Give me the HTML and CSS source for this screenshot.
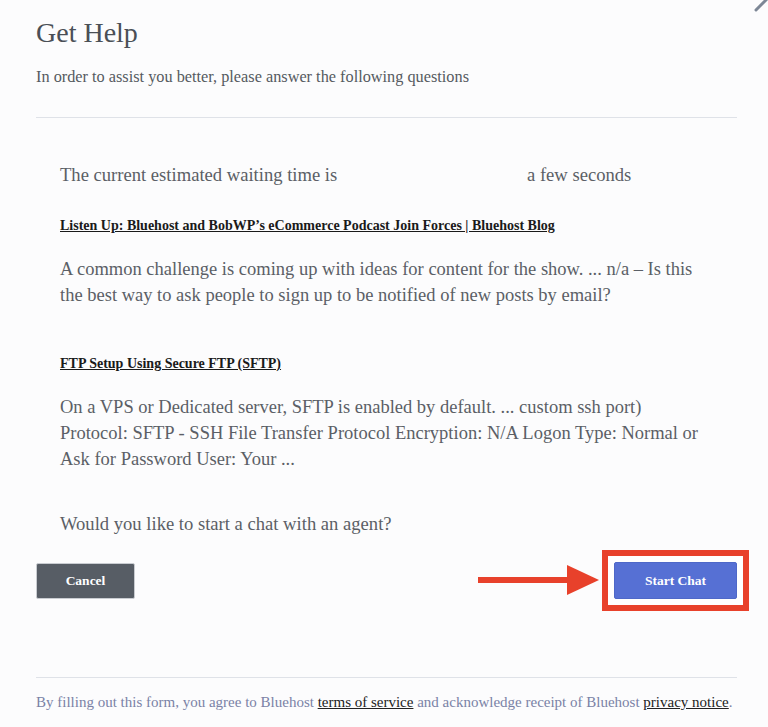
FILE: index.html
```html
<!DOCTYPE html>
<html>
<head>
<meta charset="utf-8">
<link rel="stylesheet" href="styles.css">
</head>
<body>
<div class="page">
  <svg class="close" width="20" height="20" viewBox="0 0 20 20"><line x1="2" y1="18" x2="18" y2="2" stroke="#7d8796" stroke-width="3" stroke-linecap="round"/></svg>
  <header class="head">
    <h1 class="title">Get Help</h1>
    <p class="sub">In order to assist you better, please answer the following questions</p>
  </header>
  <hr class="rule">
  <section class="content">
    <div class="wait"><span class="wait-label">The current estimated waiting time is</span><span class="wait-value">a few seconds</span></div>
    <a class="article" href="#">Listen Up: Bluehost and BobWP’s eCommerce Podcast Join Forces | Bluehost Blog</a>
    <p class="snippet">A common challenge is coming up with ideas for content for the show. ... n/a – Is this<br>the best way to ask people to sign up to be notified of new posts by email?</p>
    <a class="article second" href="#">FTP Setup Using Secure FTP (SFTP)</a>
    <p class="snippet">On a VPS or Dedicated server, SFTP is enabled by default. ... custom ssh port)<br>Protocol: SFTP - SSH File Transfer Protocol Encryption: N/A Logon Type: Normal or<br>Ask for Password User: Your ...</p>
    <p class="question">Would you like to start a chat with an agent?</p>
  </section>
  <div class="actions">
    <button class="btn cancel">Cancel</button>
    <div class="cta">
      <svg class="arrow" width="122" height="32" viewBox="0 0 122 32"><rect x="0" y="12" width="94" height="6" fill="#e8412b"/><polygon points="89,0 121,15 89,30" fill="#e8412b"/></svg>
      <div class="highlight"><button class="btn start">Start Chat</button></div>
    </div>
  </div>
  <hr class="rule foot-rule">
  <p class="legal">By filling out this form, you agree to Bluehost <a href="#">terms of service</a> and acknowledge receipt of Bluehost <a href="#">privacy notice</a>.</p>
</div>
</body>
</html>
```
FILE: styles.css
```css
html, body {
  margin: 0;
  padding: 0;
  background: #fcfcfd;
}
body {
  font-family: "Liberation Serif", "Times New Roman", serif;
  color: #555a60;
}
.page {
  position: relative;
  width: 768px;
  height: 727px;
  overflow: hidden;
  padding: 0 31px 0 36px;
  box-sizing: border-box;
}
.close {
  position: absolute;
  right: -6px;
  top: -8px;
}
.head {
  padding-top: 16px;
}
.title {
  margin: 0;
  font-weight: normal;
  font-size: 28px;
  line-height: 34px;
  color: #4a4f56;
}
.sub {
  margin: 18px 0 0;
  font-size: 16.3px;
  line-height: 18px;
  color: #555a60;
}
.rule {
  margin: 31px 0 0;
  border: 0;
  border-top: 1px solid #dfe2e8;
  height: 0;
}
.content {
  padding: 46px 0 0 24px;
}
.wait {
  display: flex;
  font-size: 18.6px;
  line-height: 22px;
  color: #5b5f66;
}
.wait-label {
  width: 467px;
}
.article {
  display: block;
  margin-top: 32px;
  font-size: 14px;
  font-weight: bold;
  line-height: 16px;
  color: #1a1a1a;
  text-decoration: underline;
}
.second {
  margin-top: 48px;
}
.snippet {
  margin: 22px 0 0;
  font-size: 18.5px;
  line-height: 26px;
  color: #5b5f66;
  white-space: nowrap;
}
.question {
  margin: 41px 0 0;
  font-size: 18.6px;
  line-height: 22px;
  color: #5b5f66;
}
.actions {
  margin-top: 15px;
  display: flex;
  justify-content: space-between;
  align-items: center;
}
.btn {
  font-family: "Liberation Serif", "Times New Roman", serif;
  font-weight: bold;
  font-size: 13.5px;
  color: #fff;
  border-radius: 2px;
  cursor: pointer;
}
.cancel {
  width: 99px;
  height: 36px;
  background: #575d65;
  border: 1px solid #c9ccd1;
}
.cta {
  display: flex;
  align-items: center;
  margin-right: -12px;
}
.arrow {
  margin-right: 2px;
}
.highlight {
  border: 6px solid #e8412b;
  padding: 6px;
  background: #fff;
}
.start {
  width: 123px;
  height: 37px;
  background: #5670d4;
  border: 1px solid #4e68c8;
}
.foot-rule {
  margin-top: 66px;
}
.legal {
  margin: 15px 0 0;
  font-size: 15px;
  line-height: 18px;
  color: #7a82a6;
}
.legal a {
  color: #222;
  text-decoration: underline;
}
```
